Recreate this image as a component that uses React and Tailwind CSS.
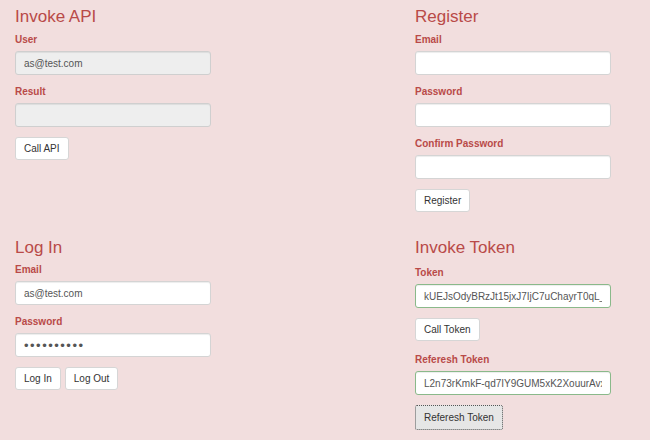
import React from 'react';

const font = { fontFamily: '"Liberation Sans", Arial, sans-serif' };

const inputBase =
  'block w-[196px] h-[24px] px-2 text-[10px] text-[#555] rounded-[3px] border shadow-[inset_0_1px_1px_rgba(0,0,0,0.075)] outline-none';

function Title({ children }) {
  return <h4 className="text-[17px] leading-[20px] text-[#b94a48] font-normal">{children}</h4>;
}

function Label({ children, className = 'mt-[6px]' }) {
  return (
    <label className={`block text-[10px] leading-[14px] font-bold text-[#b94a48] mb-1 ${className}`}>
      {children}
    </label>
  );
}

function Field({ label, type = 'text', value, readOnly, success, labelClass }) {
  const tone = readOnly
    ? 'bg-[#eeeeee] border-[#cfcfcf]'
    : success
    ? 'bg-white border-[#8ab98a]'
    : 'bg-white border-[#d4d4d4]';
  const dots = type === 'password' ? 'text-[13px] tracking-[1.5px]' : '';
  return (
    <div className="mb-[10px]">
      <Label className={labelClass}>{label}</Label>
      <input type={type} defaultValue={value} readOnly={readOnly} className={`${inputBase} ${tone} ${dots}`} />
    </div>
  );
}

function Btn({ children, active }) {
  return (
    <button
      className={
        active
          ? 'h-[25px] px-2 text-[10px] text-[#333] bg-[#e6e6e6] border border-dotted border-[#555] rounded-[2px]'
          : 'h-[23px] px-2 text-[10px] text-[#333] bg-white border border-[#d6d6d6] rounded-[3px]'
      }
    >
      {children}
    </button>
  );
}

export default function App() {
  return (
    <div className="w-[650px] h-[440px] bg-[#f2dede] overflow-hidden" style={font}>
      <div className="grid grid-cols-[400px_250px] grid-rows-[231px_209px]">
        {/* Invoke API */}
        <section className="pl-[15px] pt-[7px]">
          <Title>Invoke API</Title>
          <Field label="User" value="as@test.com" readOnly />
          <Field label="Result" value="" readOnly />
          <div className="flex">
            <Btn>Call API</Btn>
          </div>
        </section>

        {/* Register */}
        <section className="pl-[15px] pt-[7px]">
          <Title>Register</Title>
          <Field label="Email" />
          <Field label="Password" type="password" />
          <Field label="Confirm Password" type="password" />
          <div className="flex">
            <Btn>Register</Btn>
          </div>
        </section>

        {/* Log In */}
        <section className="pl-[15px] pt-[7px]">
          <Title>Log In</Title>
          <Field label="Email" value="as@test.com" labelClass="mt-[5px]" />
          <Field label="Password" type="password" value="1234567890" />
          <div className="flex gap-1 mt-[2px]">
            <Btn>Log In</Btn>
            <Btn>Log Out</Btn>
          </div>
        </section>

        {/* Invoke Token */}
        <section className="pl-[15px] pt-[7px]">
          <Title>Invoke Token</Title>
          <Field
            label="Token"
            value="kUEJsOdyBRzJt15jxJ7IjC7uChayrT0qL_8aZx3Pw"
            success
            labelClass="mt-[8px]"
          />
          <div className="flex">
            <Btn>Call Token</Btn>
          </div>
          <Field
            label="Referesh Token"
            value="L2n73rKmkF-qd7IY9GUM5xK2XouurAvx9Qe"
            success
            labelClass="mt-[12px]"
          />
          <div className="-mt-[1px]">
            <Btn active>Referesh Token</Btn>
          </div>
        </section>
      </div>
    </div>
  );
}
